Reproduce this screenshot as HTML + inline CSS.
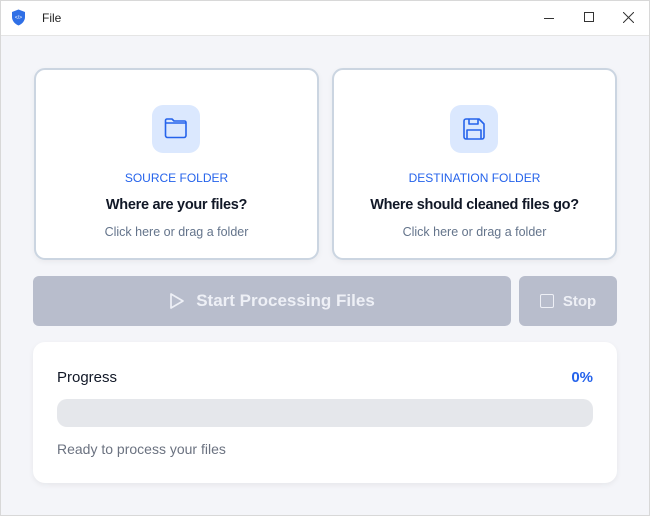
<!DOCTYPE html>
<html><head><style>
*{box-sizing:border-box;margin:0;padding:0}
body{width:650px;height:516px;background:#f4f5f9;font-family:"Liberation Sans",sans-serif;position:relative;overflow:hidden}
.frame{position:absolute;left:0;top:0;width:650px;height:516px;border:1px solid #d8d8d8;pointer-events:none;z-index:5}
.tb{position:absolute;left:0;top:0;width:650px;height:36px;background:#fff;border-bottom:1px solid #e5e5e5}
.card{position:absolute;top:68px;width:285px;height:192px;background:#fff;border:2px solid #cbd5e1;border-radius:11px;text-align:center;box-shadow:0 2px 6px rgba(0,0,0,.05)}
.ib{position:absolute;left:116px;top:35px;width:48px;height:48px;background:#dbe8fe;border-radius:11px}
.lab{position:absolute;top:101px;width:100%;font-size:12px;color:#2563eb}
.tt{position:absolute;top:127px;width:100%;font-size:14.5px;font-weight:bold;color:#111827;letter-spacing:-.3px}
.sub{position:absolute;top:155px;width:100%;font-size:12.5px;color:#64748b}
.btn{position:absolute;top:276px;height:50px;background:#b8bdcc;border-radius:6px;color:#eef0f6;font-size:17px;font-weight:bold;display:flex;align-items:center;justify-content:center}
</style></head><body>
<div class="frame"></div>
<div class="tb">
<svg style="position:absolute;left:11px;top:9px" width="15" height="17" viewBox="0 0 15 17"><path d="M7.5 0.5L14 3v5c0 4-3 7-6.5 8.5C4 15 1 12 1 8V3z" fill="#2f6fe6"/><text x="7.5" y="10" font-size="5" fill="#fff" text-anchor="middle" font-family="Liberation Sans">&lt;/&gt;</text></svg>
<div style="position:absolute;left:42px;top:11px;font-size:12px;color:#222">File</div>
<div style="position:absolute;left:544px;top:18px;width:10px;height:1px;background:#333"></div>
<div style="position:absolute;left:584px;top:12px;width:10px;height:10px;border:1px solid #333"></div>
<svg style="position:absolute;left:623px;top:12px" width="11" height="11"><path d="M0 0L11 11M11 0L0 11" stroke="#333" stroke-width="1"/></svg>
</div>
<div class="card" style="left:34px">
<div class="ib"><svg style="position:absolute;left:12px;top:13px" width="24" height="22" viewBox="0 0 24 22"><path d="M1.5 4V2.5a1.5 1.5 0 0 1 1.5-1.5h5l2 2h10.5a1.5 1.5 0 0 1 1.5 1.5v13a2 2 0 0 1-2 2H3.5a2 2 0 0 1-2-2zM1.5 5H22" fill="none" stroke="#2563eb" stroke-width="1.6" stroke-linejoin="round"/></svg></div>
<div class="lab">SOURCE FOLDER</div><div class="tt">Where are your files?</div><div class="sub">Click here or drag a folder</div></div>
<div class="card" style="left:332px">
<div class="ib"><svg style="position:absolute;left:13px;top:13px" width="22" height="22" viewBox="0 0 22 22"><path d="M3 1h13l5 5v13a2 2 0 0 1-2 2H3a2 2 0 0 1-2-2V3a2 2 0 0 1 2-2zM6 1v5h9V1M4 21v-9h14v9" fill="none" stroke="#2563eb" stroke-width="1.6" stroke-linejoin="round"/></svg></div>
<div class="lab">DESTINATION FOLDER</div><div class="tt">Where should cleaned files go?</div><div class="sub">Click here or drag a folder</div></div>
<div class="btn" style="left:33px;width:478px"><svg width="16" height="18" viewBox="0 0 16 18" style="margin-right:11px"><path d="M2 2L14 9L2 16Z" fill="none" stroke="#eef0f6" stroke-width="1.7" stroke-linejoin="round"/></svg>Start Processing Files</div>
<div class="btn" style="left:519px;width:98px;font-size:15px"><span style="display:inline-block;width:14px;height:14px;border:1.7px solid #eef0f6;border-radius:2px;margin-right:9px"></span>Stop</div>
<div style="position:absolute;left:33px;top:342px;width:584px;height:141px;background:#fff;border-radius:12px;box-shadow:0 2px 6px rgba(0,0,0,.06)">
<div style="position:absolute;left:24px;top:27px;font-size:15px;color:#111827">Progress</div>
<div style="position:absolute;right:24px;top:27px;font-size:15px;font-weight:bold;color:#2563eb">0%</div>
<div style="position:absolute;left:24px;top:57px;width:536px;height:28px;background:#e5e7eb;border-radius:10px"></div>
<div style="position:absolute;left:24px;top:99px;font-size:14px;color:#6b7280">Ready to process your files</div>
</div>
</body></html>
